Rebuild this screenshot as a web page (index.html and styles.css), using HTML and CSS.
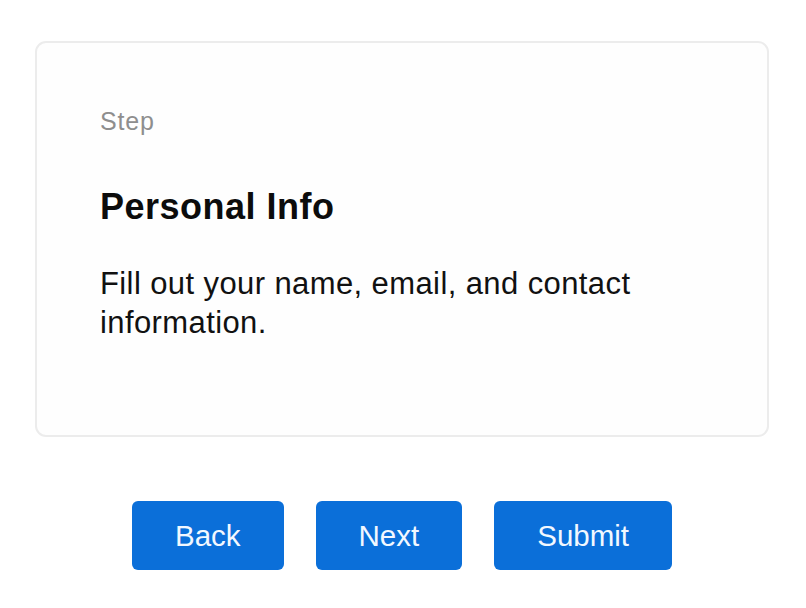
FILE: index.html
```html
<!DOCTYPE html>
<html lang="en">
<head>
<meta charset="utf-8">
<title>Step</title>
<link rel="stylesheet" href="styles.css">
</head>
<body>
<main class="page">
  <section class="card">
    <p class="step-label">Step</p>
    <h2 class="step-title">Personal Info</h2>
    <p class="step-desc">Fill out your name, email, and contact information.</p>
  </section>
  <div class="actions">
    <button class="btn">Back</button>
    <button class="btn">Next</button>
    <button class="btn">Submit</button>
  </div>
</main>
</body>
</html>
```

FILE: styles.css
```css
html, body {
  margin: 0;
  padding: 0;
  background: #ffffff;
}
body {
  font-family: "Liberation Sans", Arial, sans-serif;
  color: #111111;
}
.page {
  padding: 41px 37px 0 35px;
  display: flex;
  flex-direction: column;
}
.card {
  height: 396px;
  box-sizing: border-box;
  border: 2px solid #ececec;
  border-radius: 11px;
  background: #fefefe;
  padding: 60px 63px 0;
}
.step-label {
  margin: 0;
  font-size: 25px;
  letter-spacing: 0.8px;
  line-height: 36px;
  color: #8e8e8e;
}
.step-title {
  margin: 46px 0 0;
  font-size: 36px;
  font-weight: 700;
  letter-spacing: 0.5px;
  line-height: 44px;
  color: #0c0c0c;
}
.step-desc {
  margin: 35px 0 0;
  font-size: 31px;
  letter-spacing: 0.4px;
  line-height: 39px;
  color: #111111;
  max-width: 560px;
}
.actions {
  margin-top: 64px;
  display: flex;
  justify-content: center;
  gap: 32px;
}
.btn {
  height: 69px;
  padding: 0 43px;
  border: none;
  border-radius: 6px;
  background: #0b6fd9;
  color: #f2f8ff;
  font-family: "Liberation Sans", Arial, sans-serif;
  font-size: 29.5px;
  cursor: pointer;
}
```
